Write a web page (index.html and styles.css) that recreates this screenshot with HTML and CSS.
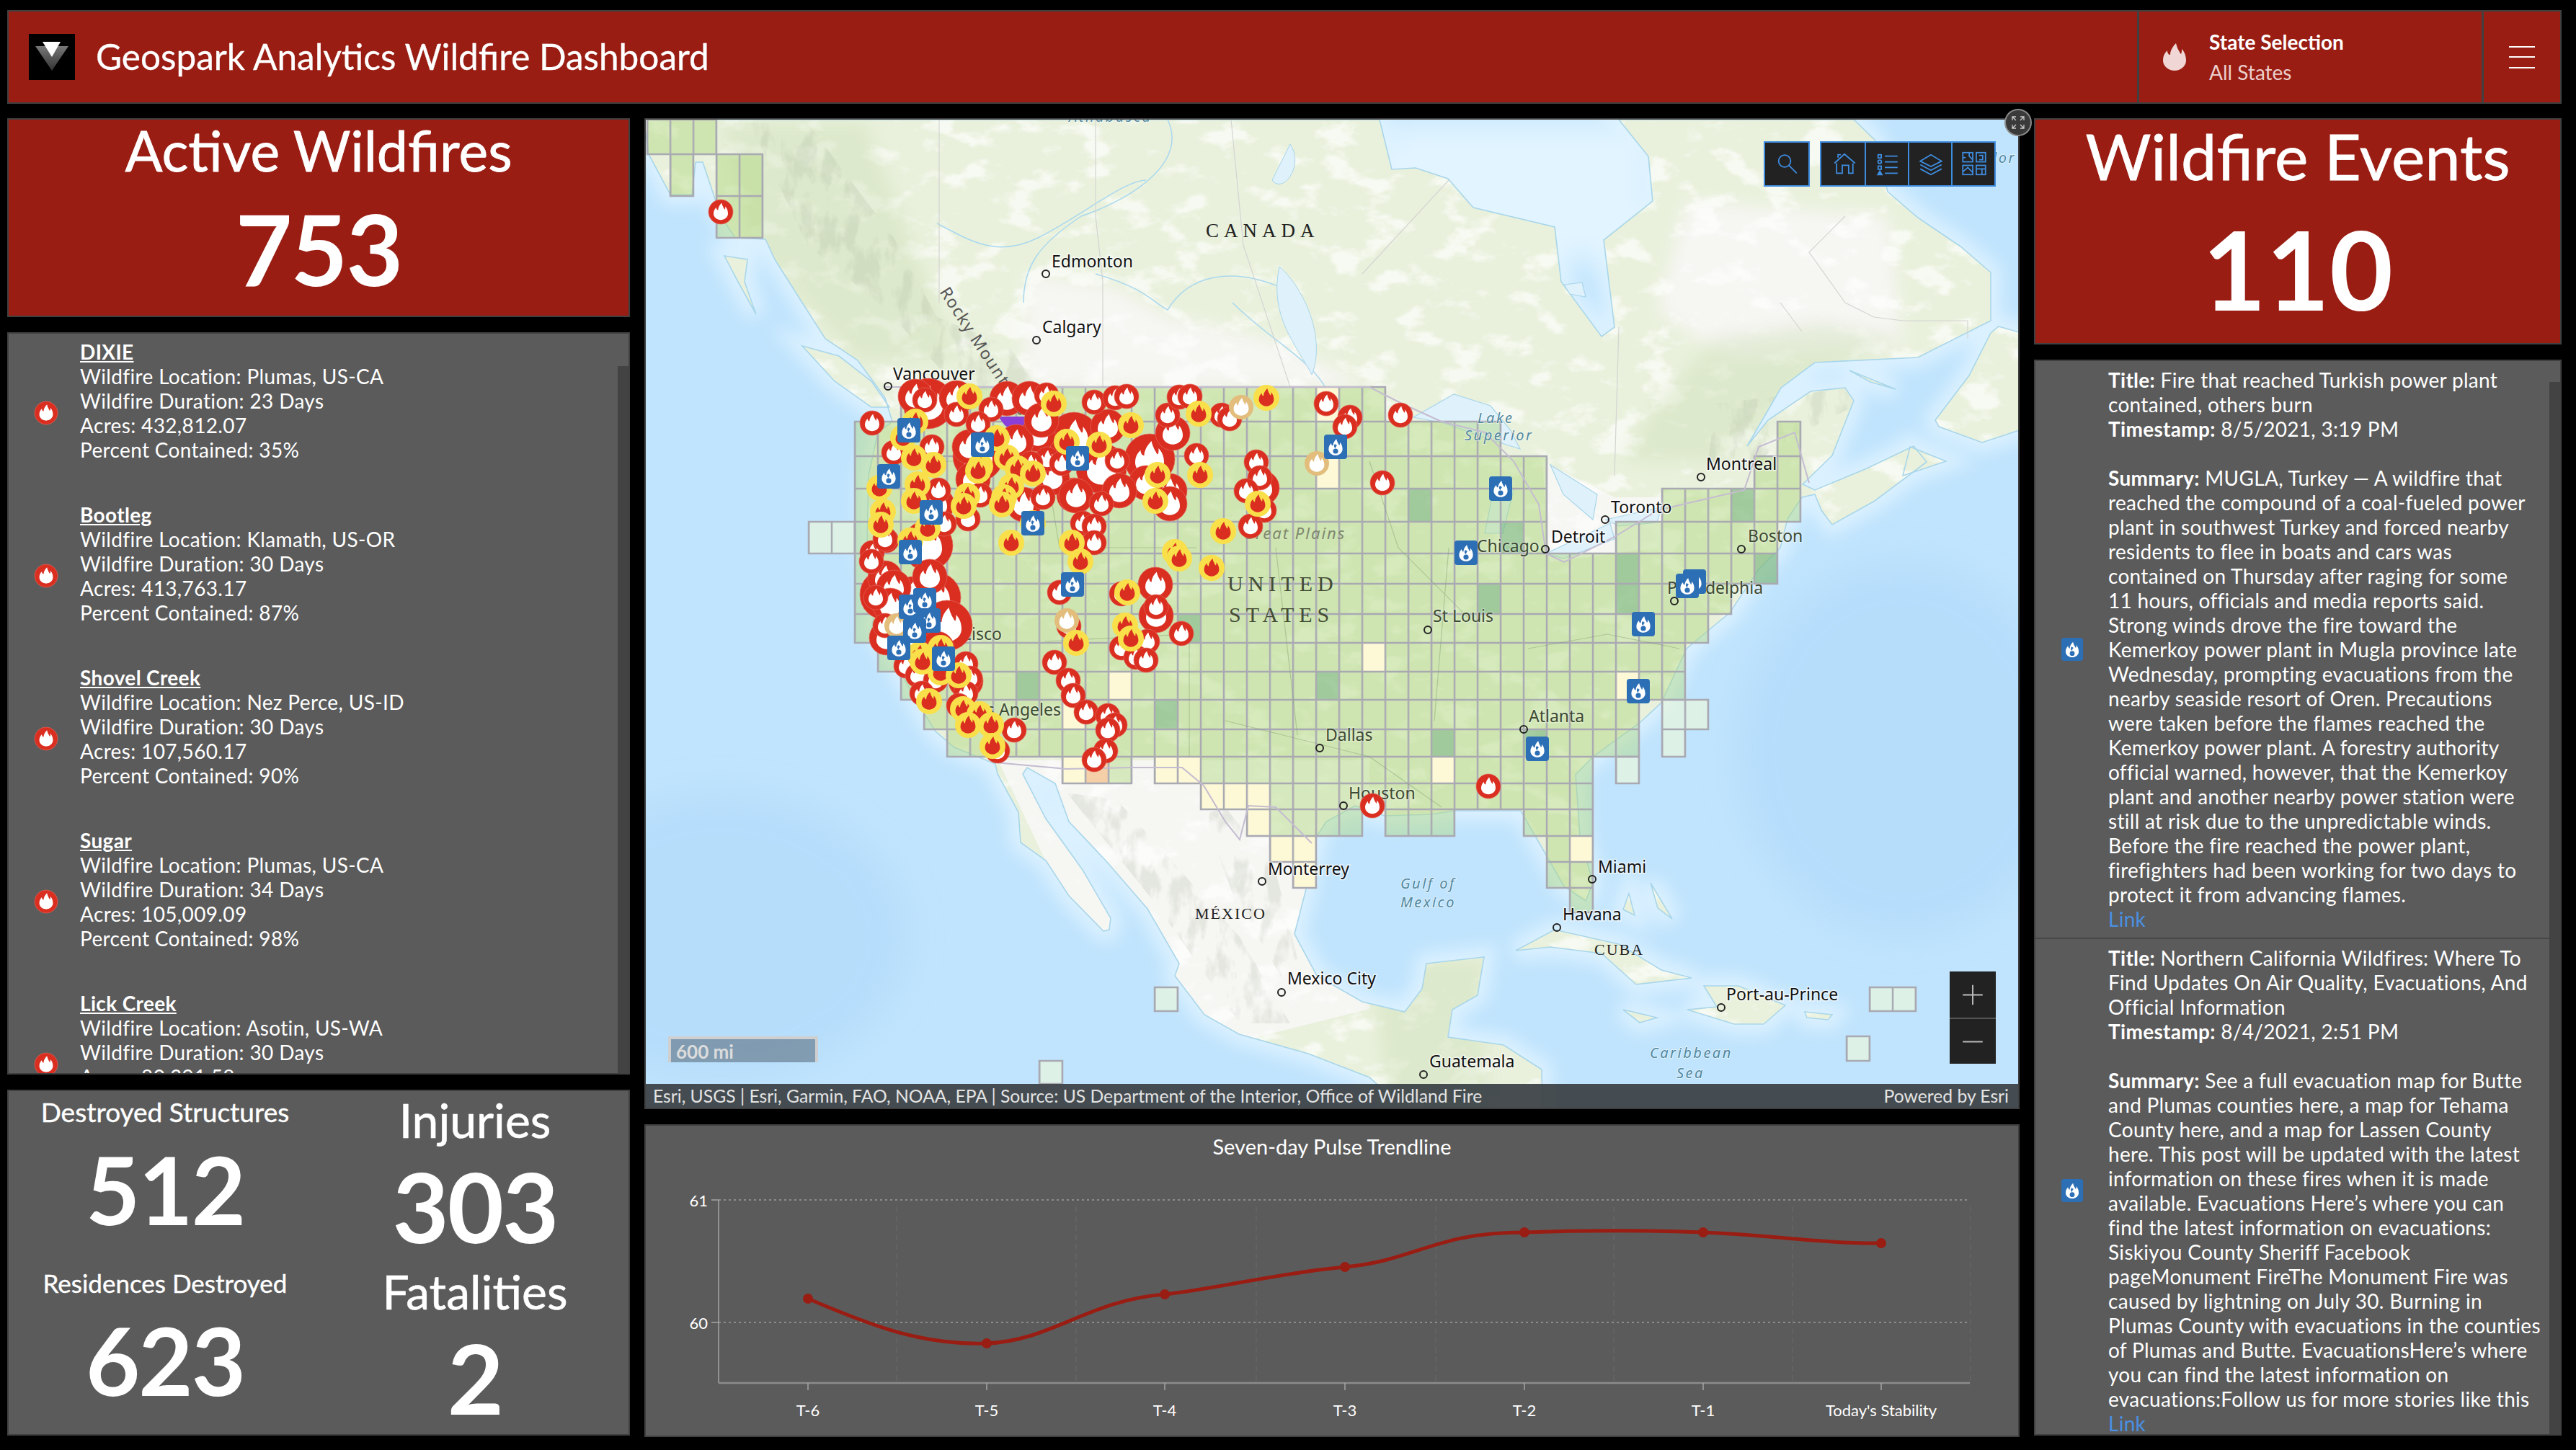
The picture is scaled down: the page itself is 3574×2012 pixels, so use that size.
FILE: index.html
```html
<!DOCTYPE html>
<html lang="en">
<head>
<meta charset="utf-8">
<title>Geospark Analytics Wildfire Dashboard</title>
<link rel="stylesheet" href="styles.css">
</head>
<body>
<svg class="defs" width="0" height="0" aria-hidden="true">
<defs>
<path id="fl" d="M1-10C2-6 3-5 4-3C5-2 5-4 5-6C8-3 8 1 8 2C8 6 4 9 0 9C-4 9-8 6-8 2C-8-1-7-3-5-5C-5-3-4-2-3-2C-3-5-1-8 1-10Z"/>
<g id="r"><circle r="17" fill="#d92e20" stroke="#e4685c" stroke-width=".7"/><use href="#fl" transform="scale(1.25)" fill="#fff"/></g>
<g id="R"><circle r="24" fill="#d92e20" stroke="#e4685c" stroke-width=".7"/><use href="#fl" transform="scale(1.75)" fill="#fff"/></g>
<g id="Q"><circle r="35" fill="#d92e20" stroke="#e4685c" stroke-width=".7"/><use href="#fl" transform="scale(2.5)" fill="#fff"/></g>
<g id="y"><circle r="18" fill="#f9df4a"/><use href="#fl" transform="scale(1.3)" fill="#d92e20"/></g>
<g id="t"><circle r="17" fill="#e2bd7c"/><use href="#fl" transform="scale(1.3)" fill="#fff"/></g>
<g id="b"><rect x="-16" y="-17" width="32" height="34" rx="4" fill="#2d6fb5"/><use href="#fl" transform="translate(0 1) scale(1.2)" fill="#fff"/><circle cy="6" r="3.6" fill="#2d6fb5"/><path d="M-1-4C-3-1-2 1 0 2C0 0 1-1 2-2" fill="#2d6fb5"/></g>
</defs>
</svg>

<div class="page">
  <header class="topbar">
    <div class="logo">
      <svg viewBox="0 0 64 64" width="64" height="64"><defs><linearGradient id="lg" x1="0" y1="0" x2="0" y2="1"><stop offset="0" stop-color="#777"/><stop offset="1" stop-color="#333"/></linearGradient></defs><path d="M9 17H55L32 51Z" fill="url(#lg)"/><path d="M19 11H44L32 32Z" fill="#fff"/></svg>
    </div>
    <h1 class="app-title">Geospark Analytics Wildfire Dashboard</h1>
    <div class="selector">
      <svg class="sel-icon" viewBox="-9 -11 18 21" width="36" height="42"><use href="#fl" fill="#f0d6d4"/></svg>
      <div class="sel-text"><div class="sel-name">State Selection</div><div class="sel-value">All States</div></div>
    </div>
    <div class="menu"><span></span><span></span><span></span></div>
  </header>

  <main class="columns">
    <section class="col">
      <div class="panel red kpi-left">
        <div class="kpi-title">Active Wildfires</div>
        <div class="kpi-number">753</div>
      </div>
      <div class="panel list fire-list">
        <div class="track track-left"></div>
        <article class="fire-row">
          <svg class="row-icon" viewBox="-18 -18 36 36" width="34" height="34"><use href="#r"/></svg>
          <div class="fire-text"><a class="fire-name">DIXIE</a><br>Wildfire Location: Plumas, US-CA<br>Wildfire Duration: 23 Days<br>Acres: 432,812.07<br>Percent Contained: 35%</div>
        </article>
        <article class="fire-row">
          <svg class="row-icon" viewBox="-18 -18 36 36" width="34" height="34"><use href="#r"/></svg>
          <div class="fire-text"><a class="fire-name">Bootleg</a><br>Wildfire Location: Klamath, US-OR<br>Wildfire Duration: 30 Days<br>Acres: 413,763.17<br>Percent Contained: 87%</div>
        </article>
        <article class="fire-row">
          <svg class="row-icon" viewBox="-18 -18 36 36" width="34" height="34"><use href="#r"/></svg>
          <div class="fire-text"><a class="fire-name">Shovel Creek</a><br>Wildfire Location: Nez Perce, US-ID<br>Wildfire Duration: 30 Days<br>Acres: 107,560.17<br>Percent Contained: 90%</div>
        </article>
        <article class="fire-row">
          <svg class="row-icon" viewBox="-18 -18 36 36" width="34" height="34"><use href="#r"/></svg>
          <div class="fire-text"><a class="fire-name">Sugar</a><br>Wildfire Location: Plumas, US-CA<br>Wildfire Duration: 34 Days<br>Acres: 105,009.09<br>Percent Contained: 98%</div>
        </article>
        <article class="fire-row">
          <svg class="row-icon" viewBox="-18 -18 36 36" width="34" height="34"><use href="#r"/></svg>
          <div class="fire-text"><a class="fire-name">Lick Creek</a><br>Wildfire Location: Asotin, US-WA<br>Wildfire Duration: 30 Days<br>Acres: 80,391.58</div>
        </article>
      </div>
      <div class="panel stats">
        <div class="stat-col stat-col-left">
          <div class="stat stat-a"><div class="stat-label">Destroyed Structures</div><div class="stat-num">512</div></div>
          <div class="stat stat-b"><div class="stat-label">Residences Destroyed</div><div class="stat-num">623</div></div>
        </div>
        <div class="stat-col stat-col-right">
          <div class="stat stat-c"><div class="stat-label big">Injuries</div><div class="stat-num large">303</div></div>
          <div class="stat stat-d"><div class="stat-label big">Fatalities</div><div class="stat-num large">2</div></div>
        </div>
      </div>
    </section>

    <section class="col col-mid">
      <div class="panel map">
        <svg class="map-svg" viewBox="896 166 1904 1371" width="1904" height="1371">
          <defs>
            <path id="land" d="M893 166L900 214L930 270L960 270L965 225L975 225L990 270L1000 300L1020 330L1062 332L1075 360L1113 420L1145 470L1190 500L1228 552L1238 585L1218 600L1205 660L1203 760L1215 830L1210 870L1228 895L1253 939L1273 975L1298 1015L1324 1037L1381 1060L1384 1074L1413 1127L1416 1169L1451 1194L1483 1243L1531 1292L1539 1290L1541 1274L1502 1207L1451 1136L1419 1074L1425 1065L1464 1087L1483 1140L1534 1194L1592 1261L1636 1337L1630 1354L1671 1408L1719 1435L1815 1462L1900 1495L1950 1540L2140 1540L2139 1484L2086 1450L2009 1439L2015 1401L2050 1381L2059 1328L1979 1337L1973 1372L1949 1404L1890 1390L1827 1354L1796 1296L1812 1234L1826 1162L1840 1140L1880 1118L1921 1132L1985 1130L2018 1125L2070 1125L2110 1125L2130 1160L2170 1230L2200 1250L2210 1225L2192 1160L2186 1075L2210 1050L2276 1002L2305 975L2340 900L2400 850L2440 790L2470 760L2480 720L2500 690L2518 686L2527 708L2542 728L2601 695L2673 641L2655 619L2590 650L2518 680L2501 672L2542 632L2572 556L2560 538L2512 543L2453 583L2424 619L2471 538L2518 503L2661 496L2762 445L2762 378L2720 342L2661 302L2619 266L2602 195L2572 166L2246 166L2287 217L2293 279L2225 333L2240 454L2222 467L2166 391L2157 315L2044 288L2009 248L1964 233L1931 235L1914 166Z"/>
            <path id="isl" d="M1113 480L1164 494L1209 529L1234 565L1209 565L1158 529ZM1005 355L1037 360L1033 391L1049 436L1024 391ZM2685 583L2732 521L2762 462L2773 453L2805 462L2805 596L2750 614L2690 592ZM2566 514L2630 540L2595 530ZM2103 1319L2157 1290L2246 1310L2305 1346L2347 1357L2270 1366L2222 1323L2151 1314ZM2364 1368L2412 1368L2477 1395L2447 1421L2406 1421L2341 1401L2382 1397ZM2252 1401L2299 1412L2275 1419ZM2504 1404L2542 1408L2536 1415L2507 1412ZM2260 1240L2268 1270L2252 1262ZM2290 1225L2320 1275L2300 1260ZM2650 620L2700 640L2640 660Z"/>
            <path id="lakes" d="M1961 579L2017 547L2068 563L2095 596L2109 623L2068 610L2003 587ZM2086 663L2100 680L2085 740L2060 740L2070 690ZM2151 645L2216 686L2210 721L2169 686ZM2145 768L2234 726L2240 748L2169 775ZM2228 721L2305 704L2299 725L2246 730ZM2170 395L2195 392L2200 412L2178 408Z"/>
            <clipPath id="landclip"><use href="#land"/><use href="#isl"/></clipPath>
            <filter id="soft" x="-20%" y="-20%" width="140%" height="140%"><feGaussianBlur stdDeviation="11"/></filter>
            <filter id="softer" x="-20%" y="-20%" width="140%" height="140%"><feGaussianBlur stdDeviation="24"/></filter>
            <filter id="mot" x="0" y="0" width="100%" height="100%"><feTurbulence type="fractalNoise" baseFrequency=".018 .03" numOctaves="5" seed="7"/><feColorMatrix values="0 0 0 0 1 0 0 0 0 1 0 0 0 0 1 6 0 0 0 -3.2"/></filter>
            <filter id="ridge" x="0" y="0" width="100%" height="100%"><feTurbulence type="fractalNoise" baseFrequency=".045 .02" numOctaves="4" seed="11" result="n"/><feColorMatrix in="n" values="0 0 0 0 .36 0 0 0 0 .42 0 0 0 0 .3 5 0 0 0 -2.3" result="c"/><feComposite in="c" in2="SourceGraphic" operator="in"/></filter>
            <pattern id="lines" patternUnits="userSpaceOnUse" x="1184.75" y="0" width="32" height="40"><rect width="2.5" height="40" fill="#a9a9b2"/></pattern>
            <path id="grid" d="M898 166H994V214H898ZM930 214H962V272H930ZM994 214H1058V272H994ZM994 272H1058V330H994ZM1250 537H1922V585H1250ZM1186 585H2082V633H1186ZM2466 585H2498V633H2466ZM1186 633H2146V678H1186ZM2434 633H2498V678H2434ZM1186 678H2146V724H1186ZM2306 678H2498V724H2306ZM1186 724H2146V768H1186ZM2242 724H2466V768H2242ZM1186 768H2466V810H1186ZM1186 810H2402V852H1186ZM1186 852H2370V892H1186ZM1218 892H2338V932H1218ZM1250 932H2338V971H1250ZM1282 971H2274V1012H1282ZM1314 1012H2274V1050H1314ZM1474 1050H1570V1087H1474ZM1602 1050H2210V1087H1602ZM1666 1087H2210V1123H1666ZM1730 1123H1890V1160H1730ZM1922 1123H2018V1160H1922ZM2114 1123H2210V1160H2114ZM1762 1160H1826V1196H1762ZM2146 1160H2210V1196H2146ZM1794 1196H1826V1232H1794ZM2146 1196H2210V1232H2146ZM2178 1232H2210V1266H2178Z"/>
            <path id="pale" d="M1122 724H1186V768H1122ZM2306 971H2370V1012H2306ZM2306 1012H2338V1050H2306ZM2242 1050H2274V1087H2242ZM1602 1370H1634V1403H1602ZM1442 1472H1474V1504H1442ZM2594 1370H2658V1403H2594ZM2562 1438H2594V1472H2562Z"/>
          </defs>

          <rect class="ocean" x="895" y="166" width="1906" height="1371"/>
          <ellipse class="deep" cx="2640" cy="1040" rx="230" ry="260" filter="url(#softer)"/>
          <ellipse class="deep" cx="1000" cy="1300" rx="260" ry="200" filter="url(#softer)"/>
          <g class="shelf" filter="url(#soft)"><use href="#land"/><use href="#isl"/></g>
          <g class="shelf bay"><rect x="1914" y="166" width="380" height="200" filter="url(#softer)"/></g>

          <g clip-path="url(#landclip)">
            <rect class="land-base" x="880" y="160" width="1940" height="1390"/>
            <path class="whitezone" d="M1425 380L1550 400L1620 440L1760 470L1870 520L1900 537L1430 537L1420 480Z" filter="url(#soft)"/>
            <path class="whitezone" d="M1385 1055H1900V1400L1700 1450L1500 1300Z"/>
            <path class="whitezone" d="M2140 640L2240 690L2310 690L2300 760L2150 780Z"/>
            <path class="whitezone" d="M2340 280L2620 300L2640 480L2400 500L2300 430Z" filter="url(#soft)"/>
            <rect class="mottle" x="895" y="166" width="1906" height="1371" filter="url(#mot)"/>
            <path class="greenish" d="M1000 170L1200 170L1330 500L1190 500L1040 340Z" filter="url(#soft)"/>
            <path class="greenish" d="M2380 470L2530 450L2640 470L2500 530L2430 600L2380 640L2250 640L2300 560Z" filter="url(#soft)"/>
            <path class="greenish" d="M1900 1330H2060V1540H1930Z" filter="url(#soft)"/>
            <path class="ridges" filter="url(#ridge)" d="M1040 170L1120 170L1240 330L1300 440L1400 480L1440 540L1330 540L1230 430L1120 340ZM1480 1100L1550 1110L1720 1300L1790 1420L1720 1420L1600 1250ZM1700 1120L1770 1210L1800 1330L1780 1360L1710 1240L1670 1130ZM2380 560L2640 530L2500 600L2420 650L2370 640Z"/>
          </g>
          <use class="coast" href="#land"/>
          <use class="coast" href="#isl"/>
          <use class="lake" href="#lakes"/>
          <path class="river" d="M1620 166C1650 230 1560 280 1500 300C1440 340 1420 370 1420 420M1520 380C1590 400 1600 420 1620 430C1650 380 1710 370 1780 400M1300 310C1340 330 1380 360 1440 330C1500 300 1560 250 1590 250M1710 420C1760 470 1820 500 1840 540"/>
          <path class="water" d="M1790 200C1810 230 1780 270 1765 250ZM1775 370C1810 400 1840 470 1820 520C1800 480 1760 440 1775 370Z"/>
          <path class="prov" d="M1303 166V420M1520 166V300L1530 390V537M1708 166L1725 340L1790 537M1890 380L2010 250M2246 454L2240 660M2560 300L2510 350L2560 420L2600 440L2640 445H2730V470M2470 420L2500 460"/>

          <use class="cells" href="#grid"/>
          <path class="dark" d="M1410 932h32v39h-32ZM1602 971h32v41h-32ZM1826 932h32v39h-32ZM1634 852h32v40h-32ZM1954 678h32v46h-32ZM2082 724h32v44h-32ZM2050 810h32v42h-32ZM2242 768h32v84h-32ZM2402 678h32v46h-32ZM2434 768h32v42h-32ZM1986 1012h32v38h-32ZM2114 1012h32v38h-32Z"/>
          <path class="yellow" d="M1890 892h32v40h-32ZM1986 1050h32v37h-32ZM2242 932h32v39h-32ZM2178 1160h32v36h-32ZM1538 932h32v39h-32ZM1474 1050h32v37h-32ZM1602 1050h64v37h-64ZM1666 1087h64v36h-64ZM1730 1087h32v36h-32ZM1730 1123h32v37h-32ZM1762 1160h64v36h-64ZM1794 1196h32v36h-32ZM1826 537h32v48h-32ZM1826 633h32v45h-32ZM1474 971h32v41h-32Z"/>
          <rect class="orange" x="1506" y="1050" width="32" height="37"/>
          <use class="palecell" href="#pale"/>
          <use class="gridlines" href="#grid"/>
          <use class="gridlines" href="#pale"/>
          <path class="border" d="M1228 537H1900L1945 560L2000 585L2060 600L2100 640L2135 700L2145 768L2170 780L2240 745L2300 708L2420 680L2440 620L2490 600L2510 670M1381 1058L1480 1067L1570 1065L1640 1065L1670 1090L1700 1140L1720 1165L1732 1118L1770 1120L1820 1170"/>
          <path class="state" d="M1250 640H1450L1470 760H1660M1450 890L1650 880V1050M1770 760L1800 1020M2010 760L1990 1000M1700 1000L1900 1050L2000 1120M2120 900L2230 880L2330 900M1900 640L1940 760L2040 860"/>

          <g class="lbl">
            <text x="1459" y="371">Edmonton</text><text x="1446" y="462">Calgary</text><text x="1239" y="527">Vancouver</text>
            <text x="2367" y="652">Montreal</text><text x="2235" y="712">Toronto</text><text x="2152" y="753">Detroit</text>
            <text x="2217" y="1211">Miami</text><text x="2168" y="1277">Havana</text><text x="2395" y="1388">Port-au-Prince</text>
            <text x="1983" y="1481">Guatemala</text><text x="1759" y="1214">Monterrey</text><text x="1786" y="1366">Mexico City</text>
          </g>
          <g class="lbl over">
            <text x="2049" y="766">Chicago</text><text x="2425" y="752">Boston</text><text x="2313" y="824">Philadelphia</text>
            <text x="1988" y="863">St Louis</text><text x="1839" y="1028">Dallas</text><text x="1871" y="1109">Houston</text>
            <text x="2121" y="1002">Atlanta</text><text x="1472" y="993" text-anchor="end">Los Angeles</text><text x="1390" y="888" text-anchor="end">San Francisco</text>
          </g>
          <g class="dots">
            <circle cx="1451" cy="380" r="5"/><circle cx="1438" cy="472" r="5"/><circle cx="1232" cy="536" r="5"/><circle cx="2360" cy="662" r="5"/><circle cx="2227" cy="721" r="5"/><circle cx="2144" cy="762" r="5"/><circle cx="2416" cy="762" r="5"/><circle cx="2323" cy="834" r="5"/><circle cx="1981" cy="874" r="5"/><circle cx="1831" cy="1038" r="5"/><circle cx="1864" cy="1118" r="5"/><circle cx="2114" cy="1012" r="5"/><circle cx="2209" cy="1220" r="5"/><circle cx="2160" cy="1287" r="5"/><circle cx="2388" cy="1398" r="5"/><circle cx="1975" cy="1491" r="5"/><circle cx="1751" cy="1223" r="5"/><circle cx="1778" cy="1377" r="5"/>
          </g>
          <g class="country">
            <text x="1673" y="329" class="sp-a">CANADA</text><text x="1703" y="820" class="sp-b">UNITED</text><text x="1705" y="863" class="sp-b">STATES</text>
            <text x="1658" y="1275" class="sp-c">MÉXICO</text><text x="2212" y="1325" class="sp-c">CUBA</text>
          </g>
          <text class="rocky" transform="translate(1303 405) rotate(57)">Rocky Mountains</text>
          <text class="plains" x="1725" y="748">Great Plains</text>
          <g class="sea">
            <text x="2050" y="587">Lake</text><text x="2032" y="611">Superior</text>
            <text x="1943" y="1233">Gulf of</text><text x="1943" y="1259">Mexico</text>
            <text x="2289" y="1468">Caribbean</text><text x="2326" y="1496">Sea</text>
            <text x="2797" y="226" text-anchor="end">Labrador</text>
            <text x="1483" y="169">Athabasca</text>
          </g>
          <path class="purple" d="M1385 578L1430 578L1424 596L1414 590L1404 598L1394 590Z"/>

          <g>
            <use href="#Q" x="1357" y="633"/><use href="#Q" x="1287" y="757"/><use href="#Q" x="1595" y="637"/><use href="#Q" x="1298" y="829"/><use href="#Q" x="1314" y="868"/><use href="#Q" x="1490" y="607"/><use href="#Q" x="1528" y="650"/><use href="#Q" x="1288" y="560"/><use href="#Q" x="1228" y="825"/>
            <use href="#R" x="1270" y="550"/><use href="#R" x="1327" y="552"/><use href="#R" x="1397" y="553"/><use href="#R" x="1428" y="553"/><use href="#R" x="1440" y="603"/><use href="#R" x="1410" y="613"/><use href="#R" x="1490" y="687"/><use href="#R" x="1460" y="663"/><use href="#R" x="1537" y="592"/><use href="#R" x="1623" y="681"/><use href="#R" x="1623" y="699"/><use href="#R" x="1627" y="601"/><use href="#R" x="1590" y="670"/><use href="#R" x="1493" y="688"/><use href="#R" x="1751" y="677"/><use href="#R" x="1228" y="802"/><use href="#R" x="1266" y="824"/><use href="#R" x="1604" y="854"/><use href="#R" x="1603" y="811"/><use href="#R" x="1445" y="583"/><use href="#R" x="1553" y="681"/><use href="#R" x="1240" y="815"/><use href="#R" x="1290" y="800"/><use href="#R" x="1235" y="840"/><use href="#R" x="1250" y="880"/><use href="#R" x="1230" y="885"/><use href="#R" x="1300" y="900"/><use href="#R" x="1265" y="905"/><use href="#R" x="1345" y="620"/><use href="#R" x="1350" y="665"/><use href="#R" x="1420" y="700"/><use href="#R" x="1300" y="700"/><use href="#R" x="1340" y="945"/>
            <use href="#r" x="1000" y="294"/><use href="#r" x="1210" y="587"/><use href="#r" x="1283" y="555"/><use href="#r" x="1327" y="575"/><use href="#r" x="1375" y="568"/><use href="#r" x="1452" y="548"/><use href="#r" x="1240" y="628"/><use href="#r" x="1293" y="620"/><use href="#r" x="1357" y="588"/><use href="#r" x="1302" y="680"/><use href="#r" x="1360" y="687"/><use href="#r" x="1343" y="720"/><use href="#r" x="1310" y="727"/><use href="#r" x="1447" y="690"/><use href="#r" x="1453" y="637"/><use href="#r" x="1473" y="643"/><use href="#r" x="1430" y="643"/><use href="#r" x="1503" y="727"/><use href="#r" x="1230" y="750"/><use href="#r" x="1210" y="767"/><use href="#r" x="1518" y="558"/><use href="#r" x="1547" y="552"/><use href="#r" x="1563" y="550"/><use href="#r" x="1550" y="639"/><use href="#r" x="1528" y="699"/><use href="#r" x="1502" y="726"/><use href="#r" x="1518" y="730"/><use href="#r" x="1518" y="753"/><use href="#r" x="1620" y="576"/><use href="#r" x="1636" y="551"/><use href="#r" x="1651" y="550"/><use href="#r" x="1695" y="576"/><use href="#r" x="1706" y="581"/><use href="#r" x="1840" y="560"/><use href="#r" x="1873" y="579"/><use href="#r" x="1866" y="592"/><use href="#r" x="1660" y="632"/><use href="#r" x="1743" y="641"/><use href="#r" x="1748" y="663"/><use href="#r" x="1729" y="681"/><use href="#r" x="1754" y="708"/><use href="#r" x="1735" y="730"/><use href="#r" x="1470" y="822"/><use href="#r" x="1556" y="824"/><use href="#r" x="1604" y="842"/><use href="#r" x="1209" y="779"/><use href="#r" x="1228" y="748"/><use href="#r" x="1215" y="829"/><use href="#r" x="1228" y="868"/><use href="#r" x="1257" y="924"/><use href="#r" x="1340" y="921"/><use href="#r" x="1346" y="941"/><use href="#r" x="1273" y="937"/><use href="#r" x="1298" y="944"/><use href="#r" x="1279" y="962"/><use href="#r" x="1340" y="962"/><use href="#r" x="1330" y="979"/><use href="#r" x="1407" y="1013"/><use href="#r" x="1384" y="1042"/><use href="#r" x="1463" y="919"/><use href="#r" x="1482" y="944"/><use href="#r" x="1489" y="965"/><use href="#r" x="1507" y="988"/><use href="#r" x="1537" y="993"/><use href="#r" x="1547" y="1006"/><use href="#r" x="1537" y="1013"/><use href="#r" x="1534" y="1042"/><use href="#r" x="1518" y="1054"/><use href="#r" x="1483" y="869"/><use href="#r" x="1592" y="890"/><use href="#r" x="1556" y="899"/><use href="#r" x="1576" y="912"/><use href="#r" x="1590" y="916"/><use href="#r" x="1639" y="879"/><use href="#r" x="1904" y="1118"/><use href="#r" x="2065" y="1091"/><use href="#r" x="1918" y="670"/><use href="#r" x="1943" y="576"/>
            <use href="#t" x="1722" y="565"/><use href="#t" x="1827" y="643"/><use href="#t" x="1244" y="868"/><use href="#t" x="1480" y="861"/>
            <use href="#y" x="1345" y="550"/><use href="#y" x="1462" y="560"/><use href="#y" x="1270" y="585"/><use href="#y" x="1253" y="607"/><use href="#y" x="1268" y="635"/><use href="#y" x="1295" y="645"/><use href="#y" x="1220" y="677"/><use href="#y" x="1273" y="672"/><use href="#y" x="1268" y="695"/><use href="#y" x="1225" y="710"/><use href="#y" x="1222" y="728"/><use href="#y" x="1287" y="733"/><use href="#y" x="1263" y="750"/><use href="#y" x="1360" y="647"/><use href="#y" x="1357" y="653"/><use href="#y" x="1342" y="688"/><use href="#y" x="1337" y="702"/><use href="#y" x="1383" y="608"/><use href="#y" x="1397" y="635"/><use href="#y" x="1412" y="650"/><use href="#y" x="1433" y="657"/><use href="#y" x="1403" y="675"/><use href="#y" x="1393" y="690"/><use href="#y" x="1390" y="700"/><use href="#y" x="1433" y="726"/><use href="#y" x="1403" y="753"/><use href="#y" x="1487" y="753"/><use href="#y" x="1480" y="613"/><use href="#y" x="1569" y="590"/><use href="#y" x="1525" y="617"/><use href="#y" x="1606" y="659"/><use href="#y" x="1603" y="695"/><use href="#y" x="1499" y="779"/><use href="#y" x="1663" y="574"/><use href="#y" x="1757" y="552"/><use href="#y" x="1665" y="659"/><use href="#y" x="1745" y="699"/><use href="#y" x="1697" y="737"/><use href="#y" x="1630" y="766"/><use href="#y" x="1636" y="775"/><use href="#y" x="1681" y="788"/><use href="#y" x="1564" y="822"/><use href="#y" x="1561" y="868"/><use href="#y" x="1569" y="886"/><use href="#y" x="1493" y="892"/><use href="#y" x="1276" y="908"/><use href="#y" x="1280" y="918"/><use href="#y" x="1305" y="899"/><use href="#y" x="1305" y="933"/><use href="#y" x="1330" y="937"/><use href="#y" x="1289" y="973"/><use href="#y" x="1336" y="984"/><use href="#y" x="1359" y="991"/><use href="#y" x="1343" y="1006"/><use href="#y" x="1375" y="1006"/><use href="#y" x="1377" y="1035"/>
            <use href="#b" x="1261" y="597"/><use href="#b" x="1363" y="617"/><use href="#b" x="1495" y="636"/><use href="#b" x="1233" y="661"/><use href="#b" x="1292" y="711"/><use href="#b" x="1433" y="726"/><use href="#b" x="1263" y="766"/><use href="#b" x="1853" y="620"/><use href="#b" x="1488" y="811"/><use href="#b" x="1263" y="842"/><use href="#b" x="1283" y="833"/><use href="#b" x="1289" y="861"/><use href="#b" x="1269" y="875"/><use href="#b" x="1247" y="899"/><use href="#b" x="1309" y="914"/><use href="#b" x="2082" y="678"/><use href="#b" x="2034" y="767"/><use href="#b" x="2351" y="807"/><use href="#b" x="2341" y="813"/><use href="#b" x="2280" y="866"/><use href="#b" x="2273" y="959"/><use href="#b" x="2133" y="1039"/>
          </g>
        </svg>

        <div class="scale">600 mi</div>
        <div class="attribution"><span>Esri, USGS | Esri, Garmin, FAO, NOAA, EPA | Source: US Department of the Interior, Office of Wildland Fire</span><span>Powered by Esri</span></div>

        <div class="tools">
          <div class="toolgroup">
            <button class="tool"><svg viewBox="0 0 60 60" width="60" height="59"><circle cx="27" cy="26" r="8.5"/><path d="M33 32L44 43"/></svg></button>
          </div>
          <div class="toolgroup">
            <button class="tool"><svg viewBox="0 0 60 60" width="60" height="59"><path d="M18 29L32 16L47 29M23 21V17H27M21 29V43H29V32H38V43H44V29"/></svg></button>
            <button class="tool"><svg viewBox="0 0 60 60" width="60" height="59"><path d="M26 19H44M26 27H44M26 35H44M26 43H44"/><rect x="16.5" y="17" width="4.5" height="4.5"/><circle cx="18.8" cy="27" r="2.4"/><rect x="16.5" y="33" width="4.5" height="4.5"/><path class="solid" d="M19 40L22 45H16Z"/></svg></button>
            <button class="tool"><svg viewBox="0 0 60 60" width="60" height="59"><path d="M15 26L30 17L45 26L30 33.500ZM15 31L30 39L45 31M15 37L30 45L45 37"/></svg></button>
            <button class="tool"><svg viewBox="0 0 60 60" width="60" height="59"><rect x="14" y="14" width="14" height="13"/><rect x="33" y="14" width="13" height="13"/><rect x="14" y="32" width="14" height="13"/><rect x="33" y="32" width="13" height="13"/><path d="M23 14V19L28 24M14 21H18M37 18H42V24H37M14 41L21 35L28 42M33 37H46M41 37V45"/></svg></button>
          </div>
        </div>
        <div class="zoom-ctl"><button class="zoom-btn"><svg viewBox="0 0 64 64" width="64" height="63"><path d="M32 18V46M18 32H46"/></svg></button><button class="zoom-btn"><svg viewBox="0 0 64 64" width="64" height="63"><path d="M18 32H46"/></svg></button></div>
        <button class="fullscreen"><svg viewBox="0 0 34 34" width="34" height="34"><path d="M14 9H9V14M9 9L14 14M20 9H25V14M25 9L20 14M14 25H9V20M9 25L14 20M20 25H25V20M25 25L20 20"/></svg></button>
      </div>

      <div class="panel chart">
        <svg viewBox="896 1560 1904 430" width="1904" height="430">
          <text class="chart-title" x="1848" y="1600">Seven-day Pulse Trendline</text>
          <path class="vgrid" d="M1244 1672V1917M1493 1672V1917M1743 1672V1917M1992 1672V1917M2239 1672V1917M2487 1672V1917M2734 1672V1917"/>
          <path class="hgrid" d="M997 1663H2733M997 1833H2733"/>
          <path class="axis" d="M997 1663V1917"/>
          <path class="axis-x" d="M997 1917H2733"/>
          <path class="axis" d="M987 1663H997M987 1833H997M1121 1917V1927M1369 1917V1927M1616 1917V1927M1866 1917V1927M2115 1917V1927M2363 1917V1927M2610 1917V1927"/>
          <text class="ytick" x="982" y="1672">61</text><text class="ytick" x="982" y="1842">60</text>
          <path class="trend" d="M1121 1800C1210 1838 1280 1865 1369 1862C1458 1859 1510 1802 1616 1794C1690 1786 1770 1765 1866 1756C1965 1747 1990 1708 2115 1708C2200 1705 2280 1705 2363 1708C2450 1711 2530 1724 2610 1723"/>
          <g class="trend-dots"><circle cx="1121" cy="1800" r="7"/><circle cx="1369" cy="1862" r="7"/><circle cx="1616" cy="1794" r="7"/><circle cx="1866" cy="1756" r="7"/><circle cx="2115" cy="1708" r="7"/><circle cx="2363" cy="1708" r="7"/><circle cx="2610" cy="1723" r="7"/></g>
          <g class="xtick"><text x="1121" y="1963">T-6</text><text x="1369" y="1963">T-5</text><text x="1616" y="1963">T-4</text><text x="1866" y="1963">T-3</text><text x="2115" y="1963">T-2</text><text x="2363" y="1963">T-1</text><text x="2610" y="1963">Today's Stability</text></g>
        </svg>
      </div>
    </section>

    <section class="col">
      <div class="panel red kpi-right">
        <div class="kpi-title large">Wildfire Events</div>
        <div class="kpi-number large">110</div>
      </div>
      <div class="panel list event-list">
        <div class="track track-right"></div>
        <article class="event-row first">
          <svg class="row-icon ev" viewBox="-17 -18 34 36" width="32" height="34"><use href="#b"/></svg>
          <div class="event-text"><b>Title:</b> Fire that reached Turkish power plant<br>contained, others burn<br><b>Timestamp:</b> 8/5/2021, 3:19 PM<br><br><b>Summary:</b> MUGLA, Turkey — A wildfire that<br>reached the compound of a coal-fueled power<br>plant in southwest Turkey and forced nearby<br>residents to flee in boats and cars was<br>contained on Thursday after raging for some<br>11 hours, officials and media reports said.<br>Strong winds drove the fire toward the<br>Kemerkoy power plant in Mugla province late<br>Wednesday, prompting evacuations from the<br>nearby seaside resort of Oren. Precautions<br>were taken before the flames reached the<br>Kemerkoy power plant. A forestry authority<br>official warned, however, that the Kemerkoy<br>plant and another nearby power station were<br>still at risk due to the unpredictable winds.<br>Before the fire reached the power plant,<br>firefighters had been working for two days to<br>protect it from advancing flames.<br><a class="link">Link</a></div>
        </article>
        <article class="event-row">
          <svg class="row-icon ev" viewBox="-17 -18 34 36" width="32" height="34"><use href="#b"/></svg>
          <div class="event-text"><b>Title:</b> Northern California Wildfires: Where To<br>Find Updates On Air Quality, Evacuations, And<br>Official Information<br><b>Timestamp:</b> 8/4/2021, 2:51 PM<br><br><b>Summary:</b> See a full evacuation map for Butte<br>and Plumas counties here, a map for Tehama<br>County here, and a map for Lassen County<br>here. This post will be updated with the latest<br>information on these fires when it is made<br>available. Evacuations Here’s where you can<br>find the latest information on evacuations:<br>Siskiyou County Sheriff Facebook<br>pageMonument FireThe Monument Fire was<br>caused by lightning on July 30. Burning in<br>Plumas County with evacuations in the counties<br>of Plumas and Butte. EvacuationsHere’s where<br>you can find the latest information on<br>evacuations:Follow us for more stories like this<br><a class="link">Link</a></div>
        </article>
      </div>
    </section>
  </main>
</div>
</body>
</html>
```

FILE: styles.css
```css
* { box-sizing: border-box; }
html, body { margin: 0; padding: 0; background: #000; }
body { width: 3574px; height: 2012px; overflow: hidden; font-family: "Lato", "Liberation Sans", sans-serif; color: #fff; }
.defs { display: block; width: 0; height: 0; }
button { padding: 0; border: 0; background: none; display: block; }
svg { display: block; }

.page { padding: 14px 20px 20px 10px; display: flex; flex-direction: column; gap: 20px; }

.topbar { height: 130px; background: #991d13; border: 2px solid #404040; display: flex; align-items: center; }
.logo { width: 64px; height: 64px; background: #000; margin-left: 28px; flex: none; }
.app-title { margin: -2px 0 0 29px; font-size: 49.5px; font-weight: 400; flex: 1; white-space: nowrap; -webkit-text-stroke: .3px #fff; }
.selector { width: 481px; height: 100%; border-left: 3px solid #404040; border-right: 3px solid #404040; display: flex; align-items: center; padding-left: 31px; }
.sel-icon { flex: none; }
.sel-text { margin-left: 30px; }
.sel-name { font-size: 28px; font-weight: 700; line-height: 42px; }
.sel-value { font-size: 28px; line-height: 42px; color: #eccfcc; }
.menu { width: 106px; display: flex; flex-direction: column; gap: 12.5px; padding-left: 35px; }
.menu span { display: block; width: 36px; height: 2px; background: #fff; }

.columns { display: grid; grid-template-columns: 864px 1908px 732px; column-gap: 20px; height: 1828px; }
.col { display: flex; flex-direction: column; gap: 21px; }

.panel { border: 2px solid #404040; background: #5b5b5b; position: relative; }
.panel.red { background: #991d13; text-align: center; }
.kpi-left { height: 276px; }
.kpi-right { height: 314px; }
.kpi-title { font-size: 77px; line-height: 84px; -webkit-text-stroke: .8px #fff; }
.kpi-title.large { font-size: 88px; line-height: 100px; }
.kpi-number { font-size: 136px; line-height: 150px; font-weight: 700; margin-top: 20px; letter-spacing: -2px; }
.kpi-number.large { font-size: 152px; line-height: 160px; margin-top: 26px; letter-spacing: 0; }

.list { overflow: hidden; font-size: 28px; line-height: 34px; }
.fire-list { height: 1030px; }
.event-list { height: 1493px; }
.track { position: absolute; right: 0; bottom: 0; width: 15px; background: #434343; }
.track-left { top: 45px; }
.track-right { top: 29px; }

.fire-row { height: 226px; display: flex; align-items: center; padding-left: 35px; }
.row-icon { flex: none; }
.fire-row .row-icon { margin-top: -6px; }
.fire-text { align-self: flex-start; margin: 8px 0 0 30px; white-space: nowrap; letter-spacing: .35px; }
.fire-name { font-weight: 700; text-decoration: underline; }

.event-row { display: flex; align-items: center; padding: 9px 0 9px 35px; }
.event-row.first { border-bottom: 2px solid #474747; }
.row-icon.ev { margin-right: 34px; }
.event-text { white-space: nowrap; letter-spacing: .3px; }
.event-text b { font-weight: 700; }
.link { color: #4a90e2; }

.stats { height: 480px; display: flex; }
.stat-col { display: flex; flex-direction: column; text-align: center; }
.stat-col-left { width: 434px; }
.stat-col-right { flex: 1; }
.stat-label { font-size: 37px; line-height: 50px; -webkit-text-stroke: .4px #fff; }
.stat-label.big { font-size: 66px; line-height: 80px; -webkit-text-stroke: .6px #fff; }
.stat-b .stat-label { font-size: 35px; }
.stat-num { font-size: 130px; line-height: 130px; font-weight: 700; letter-spacing: -2px; }
.stat-num.large { font-size: 135px; line-height: 130px; }
.stat-a { padding-top: 4px; height: 238px; }
.stat-b { padding-top: 3px; }
.stat-a .stat-num { margin-top: 17px; }
.stat-b .stat-num { margin-top: 17px; }
.stat-c { height: 238px; }
.stat-c .stat-num, .stat-d .stat-num { margin-top: 14px; }

.map { height: 1375px; }
.map-svg { overflow: hidden; }
.chart { height: 434px; }

.ocean { fill: #c0e4fd; }
.deep { fill: #aed8f9; opacity: .55; }
.shelf use { fill: #dbf1ff; stroke: #dbf1ff; stroke-width: 28px; }
.shelf rect { fill: #e2f4ff; }
.land-base { fill: #e9f1dc; }
.whitezone { fill: #f6f6f3; }
.mottle { opacity: .62; }
.greenish { fill: #cfe0b8; opacity: .45; }
.ridges { fill: #000; opacity: .2; }
.coast { fill: none; stroke: #a9d6ea; stroke-width: 1.6px; }
.lake { fill: #dff1fb; stroke: #a9d6ea; stroke-width: 1.2px; }
.river { fill: none; stroke: #a9d8ef; stroke-width: 1.5px; }
.water { fill: #dff1fb; stroke: #a9d6ea; stroke-width: 1px; }
.prov { fill: none; stroke: #d4d4d2; stroke-width: 1.2px; }
.cells { fill: rgba(175, 215, 125, .45); }
.dark { fill: rgba(95, 165, 125, .42); }
.yellow { fill: #fdf8d6; }
.orange { fill: #f4cfa8; }
.palecell { fill: rgba(232, 245, 222, .72); }
.gridlines { fill: url(#lines); stroke: #a9a9b2; stroke-width: 2.5px; }
.border { fill: none; stroke: #c4bcd0; stroke-width: 2px; }
.state { fill: none; stroke: rgba(120, 150, 110, .4); stroke-width: 1.2px; }
.purple { fill: #8a3fd8; }

.lbl text { font-family: "Noto Sans", sans-serif; font-size: 23px; fill: #111; paint-order: stroke; stroke: rgba(255,255,255,.65); stroke-width: 3px; }
.lbl.over text { fill: #3d4a34; stroke: rgba(255,255,255,.25); }
.dots circle { fill: none; stroke: #222; stroke-width: 2px; }
.country text { font-family: "Liberation Serif", serif; fill: #222; }
.sp-a { font-size: 27px; letter-spacing: 7px; }
.sp-b { font-size: 30px; letter-spacing: 7px; fill: #444c36 !important; }
.sp-c { font-size: 22px; letter-spacing: 2px; }
.rocky { font-family: "Noto Sans", sans-serif; font-size: 23px; letter-spacing: 1.5px; fill: #555; }
.plains { font-family: "Noto Sans", sans-serif; font-style: italic; font-size: 22px; letter-spacing: 2px; fill: #80886f; }
.sea text { font-family: "Noto Sans", sans-serif; font-style: italic; font-size: 20px; letter-spacing: 2.5px; fill: #52889f; paint-order: stroke; stroke: rgba(255,255,255,.5); stroke-width: 2px; }

.scale { position: absolute; left: 31px; bottom: 63px; width: 208px; height: 36px; border: 4px solid #cfcfcf; border-bottom: 0; background: rgba(95, 115, 130, .62); color: #dcdcdc; font-size: 26px; font-weight: 700; line-height: 34px; padding-left: 7px; }
.attribution { position: absolute; left: 0; right: 0; bottom: 0; height: 33px; background: rgba(64, 70, 74, .96); color: #e3e3e3; font-size: 24.7px; line-height: 33px; display: flex; justify-content: space-between; padding: 0 13px 0 10px; white-space: nowrap; }

.tools { position: absolute; top: 30px; right: 31px; display: flex; gap: 14px; }
.toolgroup { display: flex; border: 2px solid #3f8de0; background: #222; }
.tool { width: 60px; height: 59px; }
.tool + .tool { border-left: 2px solid #3f8de0; }
.tool svg { fill: none; stroke: #3f8de0; stroke-width: 1.8px; }
.tool .solid { fill: #3f8de0; }
.zoom-ctl { position: absolute; right: 31px; bottom: 61px; width: 64px; background: #222; }
.zoom-btn { width: 64px; height: 64px; }
.zoom-btn + .zoom-btn { border-top: 2px solid #555; }
.zoom-btn svg { fill: none; stroke: #bbb; stroke-width: 2px; }
.fullscreen { position: absolute; top: -13px; right: -17px; width: 34px; height: 34px; border-radius: 50%; background: #3a3a3a; box-shadow: 0 0 0 2px #8a8a8a; }
.fullscreen svg { fill: none; stroke: #ccc; stroke-width: 1.3px; }

.chart-title { font-size: 29px; fill: #fff; text-anchor: middle; }
.vgrid { stroke: #6b6b6b; stroke-width: 1px; stroke-dasharray: 8 5; fill: none; }
.hgrid { stroke: #8c8c8c; stroke-width: 2px; stroke-dasharray: 3 4; fill: none; }
.axis { stroke: #a5a5a5; stroke-width: 1.5px; fill: none; }
.axis-x { stroke: #8c8c8c; stroke-width: 2.5px; fill: none; }
.ytick { font-size: 22px; fill: #fff; text-anchor: end; }
.xtick text { font-size: 22px; fill: #fff; text-anchor: middle; }
.trend { fill: none; stroke: #991d13; stroke-width: 5px; }
.trend-dots circle { fill: #991d13; }
```
